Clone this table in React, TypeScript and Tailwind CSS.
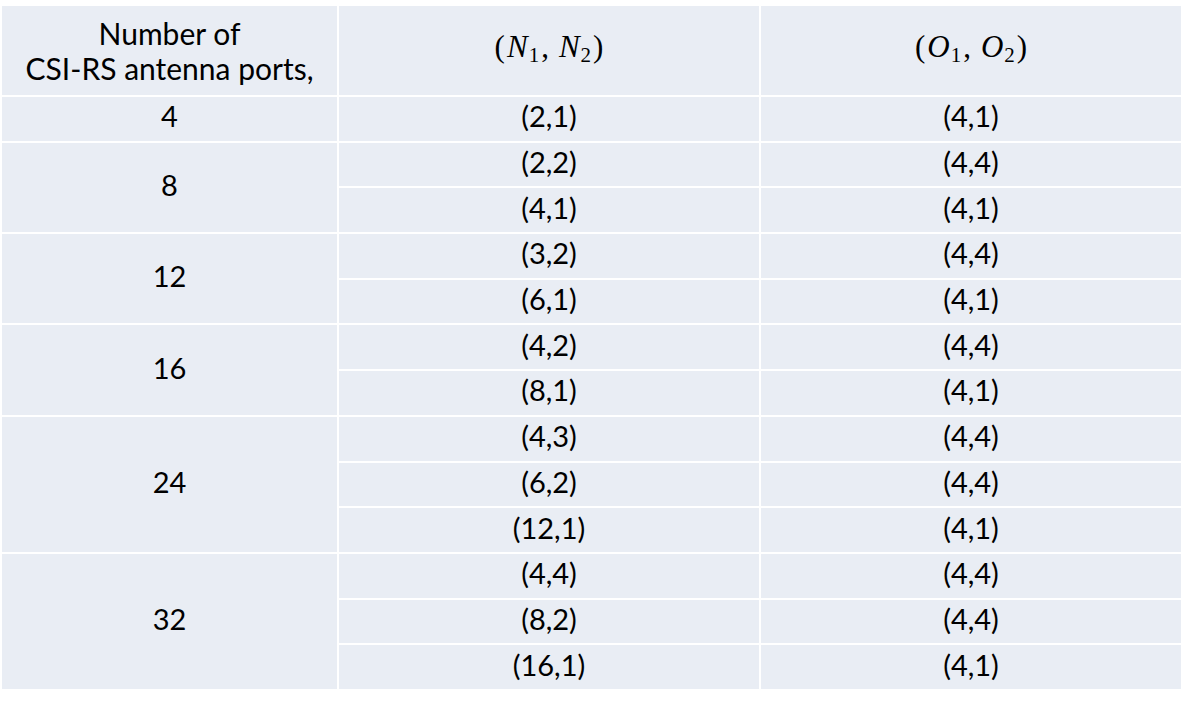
import React from "react";

const cell = "bg-[#e9edf4] flex items-center justify-center text-black";
const dataText = "font-['Lato',sans-serif] text-[29px] pb-[6px] leading-none";

function Math({ v }: { v: string }) {
  return (
    <span className="font-['Liberation_Serif',serif] text-[31px] leading-none whitespace-nowrap pb-[4px]">
      (<i className="ml-[2px]">{v}</i>
      <span className="text-[21px] align-[-5px] ml-[1px]">1</span>
      <span className="mr-[10px] ml-[2px]">,</span>
      <i>{v}</i>
      <span className="text-[21px] align-[-5px] ml-[1px] mr-[2px]">2</span>)
    </span>
  );
}

type Group = { n: string; rows: [string, string][] };

const groups: Group[] = [
  { n: "4", rows: [["(2,1)", "(4,1)"]] },
  { n: "8", rows: [["(2,2)", "(4,4)"], ["(4,1)", "(4,1)"]] },
  { n: "12", rows: [["(3,2)", "(4,4)"], ["(6,1)", "(4,1)"]] },
  { n: "16", rows: [["(4,2)", "(4,4)"], ["(8,1)", "(4,1)"]] },
  { n: "24", rows: [["(4,3)", "(4,4)"], ["(6,2)", "(4,4)"], ["(12,1)", "(4,1)"]] },
  { n: "32", rows: [["(4,4)", "(4,4)"], ["(8,2)", "(4,4)"], ["(16,1)", "(4,1)"]] },
];

const spanClass: Record<number, string> = {
  1: "row-span-1",
  2: "row-span-2",
  3: "row-span-3",
};

export default function App() {
  return (
    <div className="w-[1182px] h-[705px] bg-white pl-[2px] pt-[6px]">
      <div className="grid w-[1179px] h-[683px] gap-[2px] bg-white grid-cols-[335px_420px_420px] grid-rows-[89px_repeat(13,minmax(0,1fr))]">
        <div className={`${cell} col-start-1 flex-col font-['Lato',sans-serif] text-[30px] leading-[35px]`}>
          <span>Number of</span>
          <span>CSI-RS antenna ports,</span>
        </div>
        <div className={`${cell} col-start-2`}>
          <Math v="N" />
        </div>
        <div className={`${cell} col-start-3`}>
          <Math v="O" />
        </div>
        {groups.map((g) => (
          <React.Fragment key={g.n}>
            <div className={`${cell} col-start-1 ${spanClass[g.rows.length]}`}>
              <span className={dataText}>{g.n}</span>
            </div>
            {g.rows.map((r, i) => (
              <React.Fragment key={i}>
                <div className={`${cell} col-start-2`}>
                  <span className={dataText}>{r[0]}</span>
                </div>
                <div className={`${cell} col-start-3`}>
                  <span className={dataText}>{r[1]}</span>
                </div>
              </React.Fragment>
            ))}
          </React.Fragment>
        ))}
      </div>
    </div>
  );
}
